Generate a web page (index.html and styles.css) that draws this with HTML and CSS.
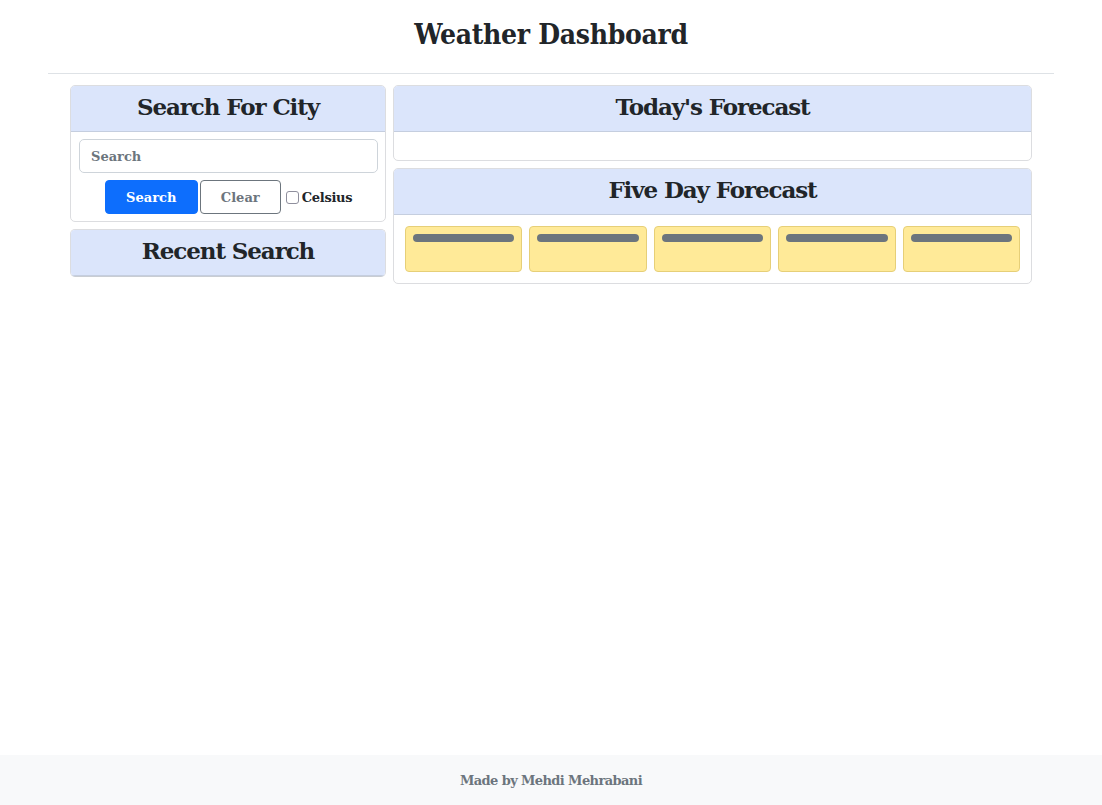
FILE: index.html
```html
<!DOCTYPE html>
<html lang="en">
<head>
<meta charset="utf-8">
<title>Weather Dashboard</title>
<link rel="stylesheet" href="styles.css">
</head>
<body>
<div class="page">
  <header class="top">
    <h1 class="title">Weather Dashboard</h1>
  </header>
  <main class="main">
    <aside class="side">
      <section class="card">
        <div class="card-head"><h2>Search For City</h2></div>
        <div class="search-body">
          <input class="search-input" type="text" placeholder="Search">
          <div class="actions">
            <button class="btn btn-primary">Search</button>
            <button class="btn btn-outline">Clear</button>
            <label class="check"><span class="box"></span>Celsius</label>
          </div>
        </div>
      </section>
      <section class="card recent">
        <div class="card-head"><h2>Recent Search</h2></div>
      </section>
    </aside>
    <div class="content">
      <section class="card">
        <div class="card-head"><h2>Today's Forecast</h2></div>
        <div class="today-body"></div>
      </section>
      <section class="card">
        <div class="card-head"><h2>Five Day Forecast</h2></div>
        <div class="days">
          <div class="day"><span class="bar"></span></div>
          <div class="day"><span class="bar"></span></div>
          <div class="day"><span class="bar"></span></div>
          <div class="day"><span class="bar"></span></div>
          <div class="day"><span class="bar"></span></div>
        </div>
      </section>
    </div>
  </main>
  <footer class="foot">Made by Mehdi Mehrabani</footer>
</div>
</body>
</html>
```

FILE: styles.css
```css
* { box-sizing: border-box; }
html, body { margin: 0; padding: 0; }
body {
  font-family: "DejaVu Serif", "Liberation Serif", serif;
  font-weight: 700;
  color: #212529;
  background: #fff;
}
.page {
  min-height: 805px;
  display: flex;
  flex-direction: column;
}
.top {
  margin: 0 48px;
  border-bottom: 1px solid #dee2e6;
  height: 74px;
  display: flex;
  justify-content: center;
  padding-top: 17px;
}
.title {
  margin: 0;
  font-size: 28px;
  line-height: 36px;
  letter-spacing: -0.3px;
  font-stretch: condensed;
}
.main {
  flex: 1;
  display: flex;
  gap: 7px;
  padding: 11px 0 0 70px;
  align-items: flex-start;
}
.side {
  width: 316px;
  display: flex;
  flex-direction: column;
  gap: 7px;
}
.content {
  width: 639px;
  display: flex;
  flex-direction: column;
  gap: 7px;
}
.card {
  border: 1px solid #dcdde0;
  border-radius: 5px;
  background: #fff;
  overflow: hidden;
}
.card-head {
  background: #dbe5fb;
  border-bottom: 1px solid #c5cedf;
  height: 46px;
  display: flex;
  align-items: center;
  justify-content: center;
  padding-bottom: 3px;
}
.card-head h2 {
  margin: 0;
  font-size: 23px;
  letter-spacing: -1.1px;
  line-height: 30px;
}
.recent { border-bottom-color: #c9cdd3; }
.search-body {
  padding: 7px 7px 7px 8px;
}
.search-input {
  display: block;
  width: 100%;
  height: 34px;
  border: 1px solid #ced4da;
  border-radius: 5px;
  padding: 0 11px;
  font-family: inherit;
  font-weight: 700;
  font-size: 13px;
  color: #212529;
}
.search-input::placeholder { color: #6c757d; }
.actions {
  display: flex;
  justify-content: center;
  align-items: center;
  gap: 2px;
  margin-top: 7px;
}
.btn {
  height: 34px;
  border-radius: 4px;
  font-family: inherit;
  font-weight: 700;
  font-size: 13px;
  cursor: pointer;
}
.btn-primary {
  width: 93px;
  background: #0d6efd;
  border: 1px solid #0d6efd;
  color: #fff;
}
.btn-outline {
  width: 81px;
  background: #fff;
  border: 1px solid #6c757d;
  color: #6c757d;
}
.check {
  display: flex;
  align-items: center;
  gap: 3px;
  font-size: 13px;
  margin-left: 3px;
  letter-spacing: -0.3px;
}
.box {
  width: 13px;
  height: 13px;
  border: 1px solid #8f8f9d;
  border-radius: 3px;
  background: #fff;
}
.today-body { height: 28px; }
.days {
  display: flex;
  gap: 7px;
  padding: 11px;
}
.day {
  flex: 1;
  height: 46px;
  background: #ffea98;
  border: 1px solid #e6cf78;
  border-radius: 4px;
  padding: 7px 7px 0 7px;
}
.bar {
  display: block;
  height: 8px;
  border-radius: 4px;
  background: #6c757d;
}
.foot {
  height: 50px;
  background: #f8f9fa;
  color: #6c757d;
  font-size: 13px;
  display: flex;
  align-items: center;
  justify-content: center;
  letter-spacing: -0.6px;
}
```
